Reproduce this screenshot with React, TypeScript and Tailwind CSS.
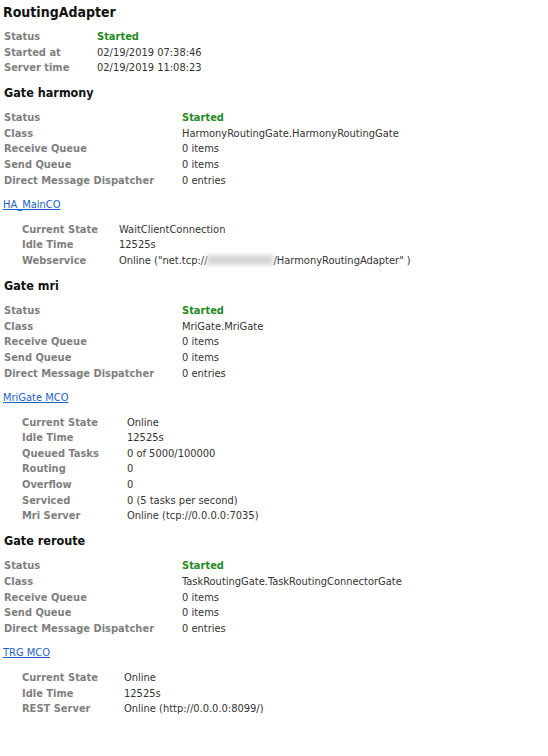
import React from 'react';

type Row = { label: string; value: React.ReactNode };

const started = <span className="font-bold text-[#1f8a1f]">Started</span>;

// one label/value table; labelW sets where the value column starts
function InfoTable({ rows, labelW, indent = false }: { rows: Row[]; labelW: string; indent?: boolean }) {
  return (
    <table className={`border-collapse ${indent ? 'ml-[18px]' : ''}`}>
      <tbody>
        {rows.map((r) => (
          <tr key={r.label} className="h-[15.6px] leading-[15.6px]">
            <td className={`${labelW} p-0 align-middle font-bold text-[#7f7f7f] whitespace-nowrap`}>{r.label}</td>
            <td className="p-0 align-middle text-[#333333] whitespace-nowrap">{r.value}</td>
          </tr>
        ))}
      </tbody>
    </table>
  );
}

function GateHeader({ title }: { title: string }) {
  return <h2 className="mt-[9.5px] mb-[9px] text-[12.5px] leading-[16px] font-bold text-[#111]">{title}</h2>;
}

function McoLink({ name }: { name: string }) {
  return (
    <a href="#" className="mt-[9px] mb-[9px] -ml-px block leading-[15.6px] text-[#1b62c4] underline underline-offset-1">
      {name}
    </a>
  );
}

export default function App() {
  return (
    <div className="min-h-[756px] bg-white px-[4px] pt-[2px] font-['DejaVu_Sans_Condensed','DejaVu_Sans',sans-serif] text-[11px] text-[#333]">
      <h1 className="mb-[7px] -ml-px text-[14px] leading-[20px] font-bold text-[#111]">RoutingAdapter</h1>
      <InfoTable
        labelW="w-[93px]"
        rows={[
          { label: 'Status', value: started },
          { label: 'Started at', value: '02/19/2019 07:38:46' },
          { label: 'Server time', value: '02/19/2019 11:08:23' },
        ]}
      />

      <GateHeader title="Gate harmony" />
      <InfoTable
        labelW="w-[178px]"
        rows={[
          { label: 'Status', value: started },
          { label: 'Class', value: 'HarmonyRoutingGate.HarmonyRoutingGate' },
          { label: 'Receive Queue', value: '0 items' },
          { label: 'Send Queue', value: '0 items' },
          { label: 'Direct Message Dispatcher', value: '0 entries' },
        ]}
      />
      <McoLink name="HA_MainCO" />
      <InfoTable
        indent
        labelW="w-[97px]"
        rows={[
          { label: 'Current State', value: 'WaitClientConnection' },
          { label: 'Idle Time', value: '12525s' },
          {
            label: 'Webservice',
            value: (
              <span>
                Online ("net.tcp://
                <span className="inline-block h-[10px] w-[66px] translate-y-[1px] bg-[#d6d6d6] blur-[2px]" />
                /HarmonyRoutingAdapter" )
              </span>
            ),
          },
        ]}
      />

      <GateHeader title="Gate mri" />
      <InfoTable
        labelW="w-[178px]"
        rows={[
          { label: 'Status', value: started },
          { label: 'Class', value: 'MriGate.MriGate' },
          { label: 'Receive Queue', value: '0 items' },
          { label: 'Send Queue', value: '0 items' },
          { label: 'Direct Message Dispatcher', value: '0 entries' },
        ]}
      />
      <McoLink name="MriGate MCO" />
      <InfoTable
        indent
        labelW="w-[105px]"
        rows={[
          { label: 'Current State', value: 'Online' },
          { label: 'Idle Time', value: '12525s' },
          { label: 'Queued Tasks', value: '0 of 5000/100000' },
          { label: 'Routing', value: '0' },
          { label: 'Overflow', value: '0' },
          { label: 'Serviced', value: '0 (5 tasks per second)' },
          { label: 'Mri Server', value: 'Online (tcp://0.0.0.0:7035)' },
        ]}
      />

      <GateHeader title="Gate reroute" />
      <InfoTable
        labelW="w-[178px]"
        rows={[
          { label: 'Status', value: started },
          { label: 'Class', value: 'TaskRoutingGate.TaskRoutingConnectorGate' },
          { label: 'Receive Queue', value: '0 items' },
          { label: 'Send Queue', value: '0 items' },
          { label: 'Direct Message Dispatcher', value: '0 entries' },
        ]}
      />
      <McoLink name="TRG MCO" />
      <InfoTable
        indent
        labelW="w-[102px]"
        rows={[
          { label: 'Current State', value: 'Online' },
          { label: 'Idle Time', value: '12525s' },
          { label: 'REST Server', value: 'Online (http://0.0.0.0:8099/)' },
        ]}
      />
    </div>
  );
}
